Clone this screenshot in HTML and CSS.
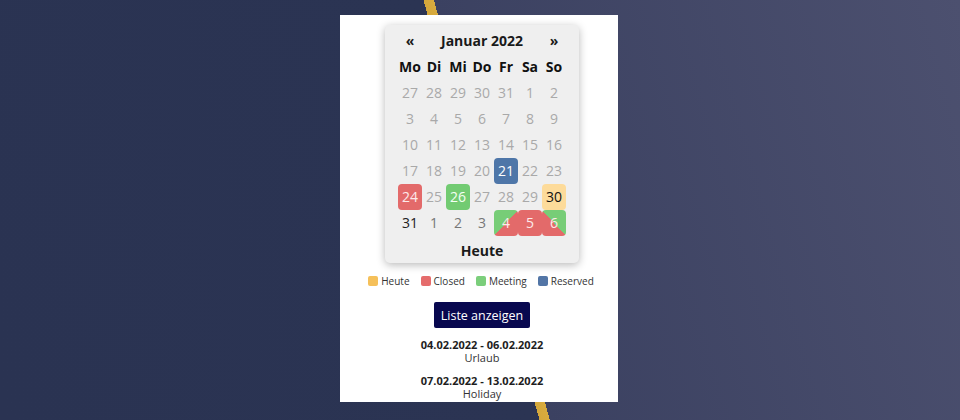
FILE: index.html
```html
<!DOCTYPE html>
<html lang="de">
<head>
<meta charset="utf-8">
<title>Kalender</title>
<link rel="stylesheet" href="styles.css">
</head>
<body>
<div class="page">
  <div class="card">
    <div class="calendar">
      <div class="cal-head">
        <span class="nav">«</span>
        <span class="title">Januar 2022</span>
        <span class="nav">»</span>
      </div>
      <div class="grid weekdays">
        <div>Mo</div><div>Di</div><div>Mi</div><div>Do</div><div>Fr</div><div>Sa</div><div>So</div>
      </div>
      <div class="grid days">
        <div class="d past">27</div><div class="d past">28</div><div class="d past">29</div><div class="d past">30</div><div class="d past">31</div><div class="d past">1</div><div class="d past">2</div>
        <div class="d past">3</div><div class="d past">4</div><div class="d past">5</div><div class="d past">6</div><div class="d past">7</div><div class="d past">8</div><div class="d past">9</div>
        <div class="d past">10</div><div class="d past">11</div><div class="d past">12</div><div class="d past">13</div><div class="d past">14</div><div class="d past">15</div><div class="d past">16</div>
        <div class="d past">17</div><div class="d past">18</div><div class="d past">19</div><div class="d past">20</div><div class="d reserved">21</div><div class="d past">22</div><div class="d past">23</div>
        <div class="d closed">24</div><div class="d past">25</div><div class="d meeting">26</div><div class="d past">27</div><div class="d past">28</div><div class="d past">29</div><div class="d today">30</div>
        <div class="d">31</div><div class="d next">1</div><div class="d next">2</div><div class="d next">3</div><div class="d split-start">4</div><div class="d closed full">5</div><div class="d split-end">6</div>
      </div>
      <div class="cal-foot">Heute</div>
    </div>
    <div class="legend">
      <span class="item"><i class="sw sw-today"></i>Heute</span>
      <span class="item"><i class="sw sw-closed"></i>Closed</span>
      <span class="item"><i class="sw sw-meeting"></i>Meeting</span>
      <span class="item"><i class="sw sw-reserved"></i>Reserved</span>
    </div>
    <button class="btn">Liste anzeigen</button>
    <div class="events">
      <div class="event">
        <div class="range">04.02.2022 - 06.02.2022</div>
        <div class="desc">Urlaub</div>
      </div>
      <div class="event">
        <div class="range">07.02.2022 - 13.02.2022</div>
        <div class="desc">Holiday</div>
      </div>
    </div>
  </div>
</div>
</body>
</html>
```
FILE: styles.css
```css
html, body {
  margin: 0;
  padding: 0;
}
body {
  font-family: "Open Sans", "Noto Sans", "DejaVu Sans", sans-serif;
}
.page {
  width: 960px;
  height: 420px;
  overflow: hidden;
  background: linear-gradient(74.56deg,
    #2a3352 0px, #2b3453 520px,
    #d4a73b 520px, #d8ab3e 530px,
    #3b4161 530px, #4c506f 1037px);
  padding-top: 15px;
  box-sizing: border-box;
}
.card {
  width: 278px;
  height: 387px;
  margin: 0 auto;
  transform: translateX(-1px);
  background: #fff;
  overflow: hidden;
  display: flex;
  flex-direction: column;
  align-items: center;
  padding-top: 10px;
  box-sizing: border-box;
}
.calendar {
  width: 194px;
  box-sizing: border-box;
  padding: 2px 13px 0 13px;
  background: #efefef;
  border-radius: 5px;
  box-shadow: 0 2px 9px rgba(0, 0, 0, 0.28);
  margin-left: 6px;
}
.cal-head {
  display: grid;
  grid-template-columns: 24px 1fr 24px;
  height: 27px;
  align-items: center;
  font-weight: 700;
  font-size: 14px;
  color: #1a1a1a;
  text-align: center;
}
.grid {
  display: grid;
  grid-template-columns: repeat(7, 24px);
}
.weekdays div {
  height: 26px;
  line-height: 26px;
  text-align: center;
  font-weight: 700;
  font-size: 14px;
  color: #111;
}
.d {
  height: 26px;
  line-height: 26px;
  text-align: center;
  font-size: 14px;
  color: #222;
  border-radius: 4px;
}
.d.past {
  color: #a9a9a9;
}
.d.next {
  color: #777777;
}
.d.reserved {
  background: #4e76a8;
  color: #fff;
}
.d.closed {
  background: #e36a6a;
  color: #fdeaea;
}
.d.meeting {
  background: #72cb72;
  color: #f4fff4;
}
.d.today {
  background: #fddb9a;
  color: #111;
}
.d.split-start {
  background: linear-gradient(to bottom right, #77cd77 50%, #e36a6a 50%);
  color: #fdeaea;
}
.d.split-end {
  background: linear-gradient(to bottom left, #77cd77 50%, #e36a6a 50%);
  color: #fdeaea;
}
.cal-foot {
  height: 27px;
  line-height: 30px;
  text-align: center;
  font-weight: 700;
  font-size: 14px;
  color: #1a1a1a;
}
.legend {
  display: flex;
  gap: 11px;
  margin-top: 11px;
  font-size: 10px;
  color: #333;
  line-height: 14px;
  margin-left: 4px;
}
.item {
  display: flex;
  align-items: center;
  gap: 3px;
}
.sw {
  display: inline-block;
  width: 10px;
  height: 10px;
  border-radius: 2px;
}
.sw-today { background: #f5c05a; }
.sw-closed { background: #e56c6c; }
.sw-meeting { background: #7bce7b; }
.sw-reserved { background: #5275a6; }
.btn {
  margin-top: 14px;
  width: 96px;
  height: 26px;
  border: none;
  border-radius: 2px;
  background: #08084f;
  color: #fff;
  font-family: inherit;
  font-size: 12.5px;
  padding: 0;
  margin-left: 6px;
}
.events {
  margin-top: 10px;
  display: flex;
  flex-direction: column;
  align-items: center;
  gap: 10px;
  margin-left: 6px;
}
.event {
  text-align: center;
  line-height: 13px;
}
.range {
  font-weight: 700;
  font-size: 11px;
  color: #1e1e1e;
}
.desc {
  font-size: 11px;
  color: #333;
}
```
